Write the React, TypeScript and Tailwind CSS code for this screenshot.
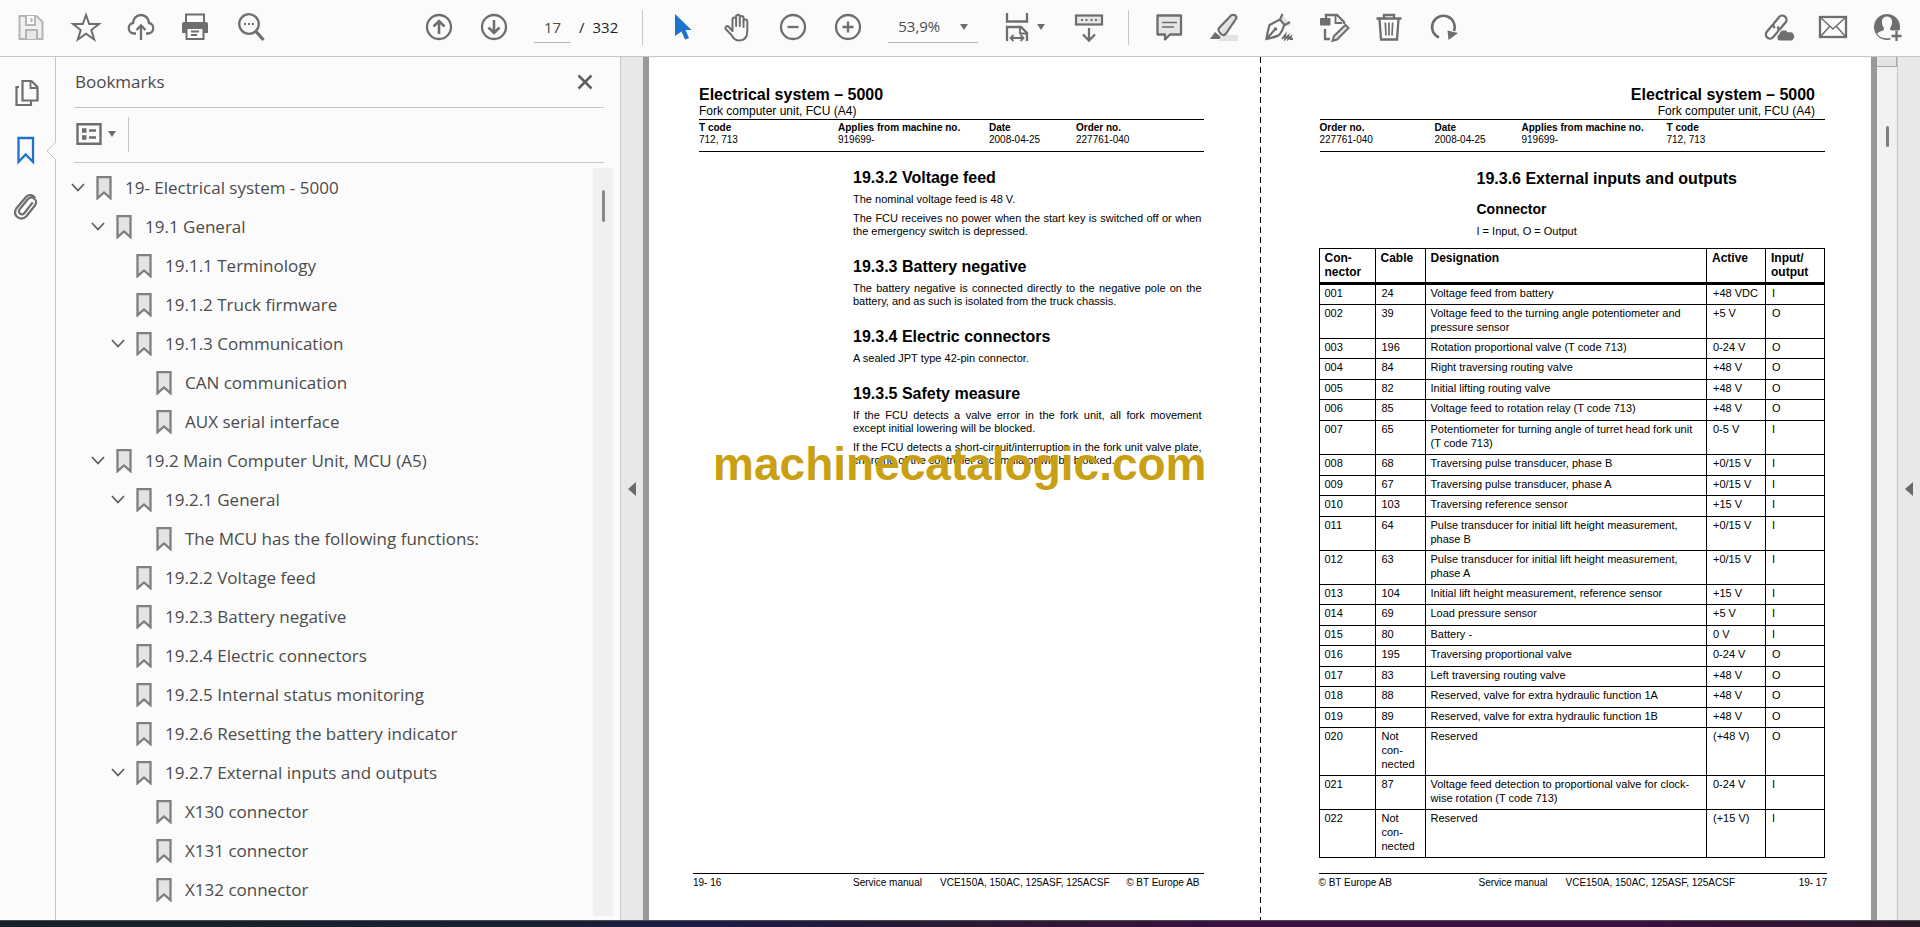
import { useState } from 'react'
import type { ReactNode } from 'react'
import clsx from 'clsx'

interface BookmarkItem {
  level: number
  label: string
  open?: boolean
}

const BOOKMARKS: BookmarkItem[] = [
  { level: 0, label: '19- Electrical system - 5000', open: true },
  { level: 1, label: '19.1 General', open: true },
  { level: 2, label: '19.1.1 Terminology' },
  { level: 2, label: '19.1.2 Truck firmware' },
  { level: 2, label: '19.1.3 Communication', open: true },
  { level: 3, label: 'CAN communication' },
  { level: 3, label: 'AUX serial interface' },
  { level: 1, label: '19.2 Main Computer Unit, MCU (A5)', open: true },
  { level: 2, label: '19.2.1 General', open: true },
  { level: 3, label: 'The MCU has the following functions:' },
  { level: 2, label: '19.2.2 Voltage feed' },
  { level: 2, label: '19.2.3 Battery negative' },
  { level: 2, label: '19.2.4 Electric connectors' },
  { level: 2, label: '19.2.5 Internal status monitoring' },
  { level: 2, label: '19.2.6 Resetting the battery indicator' },
  { level: 2, label: '19.2.7 External inputs and outputs', open: true },
  { level: 3, label: 'X130 connector' },
  { level: 3, label: 'X131 connector' },
  { level: 3, label: 'X132 connector' },
]

const INDENT = ['pl-0', 'pl-5', 'pl-10', 'pl-15']

// pin, cable, designation, active, input/output
const PINS: string[][] = [
  ['001', '24', 'Voltage feed from battery', '+48 VDC', 'I'],
  ['002', '39', 'Voltage feed to the turning angle potentiometer and pressure sensor', '+5 V', 'O'],
  ['003', '196', 'Rotation proportional valve (T code 713)', '0-24 V', 'O'],
  ['004', '84', 'Right traversing routing valve', '+48 V', 'O'],
  ['005', '82', 'Initial lifting routing valve', '+48 V', 'O'],
  ['006', '85', 'Voltage feed to rotation relay (T code 713)', '+48 V', 'O'],
  ['007', '65', 'Potentiometer for turning angle of turret head fork unit (T code 713)', '0-5 V', 'I'],
  ['008', '68', 'Traversing pulse transducer, phase B', '+0/15 V', 'I'],
  ['009', '67', 'Traversing pulse transducer, phase A', '+0/15 V', 'I'],
  ['010', '103', 'Traversing reference sensor', '+15 V', 'I'],
  ['011', '64', 'Pulse transducer for initial lift height measurement, phase B', '+0/15 V', 'I'],
  ['012', '63', 'Pulse transducer for initial lift height measurement, phase A', '+0/15 V', 'I'],
  ['013', '104', 'Initial lift height measurement, reference sensor', '+15 V', 'I'],
  ['014', '69', 'Load pressure sensor', '+5 V', 'I'],
  ['015', '80', 'Battery -', '0 V', 'I'],
  ['016', '195', 'Traversing proportional valve', '0-24 V', 'O'],
  ['017', '83', 'Left traversing routing valve', '+48 V', 'O'],
  ['018', '88', 'Reserved, valve for extra hydraulic function 1A', '+48 V', 'O'],
  ['019', '89', 'Reserved, valve for extra hydraulic function 1B', '+48 V', 'O'],
  ['020', 'Not\ncon-\nnected', 'Reserved', '(+48 V)', 'O'],
  ['021', '87', 'Voltage feed detection to proportional valve for clock-wise rotation (T code 713)', '0-24 V', 'I'],
  ['022', 'Not\ncon-\nnected', 'Reserved', '(+15 V)', 'I'],
]

const ICONS: Record<string, ReactNode> = {
  save: (
    <g stroke="#b5b5b5" strokeWidth="2">
      <path d="M2.500 3h17l6 6v17h-23z" fill="#f0f0f0" />
      <path d="M9 3v9h9V3M14.500 5v4" fill="#fbfbfb" />
      <path d="M9 26v-9h11v9" fill="#e9e9e9" />
    </g>
  ),
  star: <path d="M14 2l3.200 9H27l-7.700 6 2.900 9.500L14 20.800 5.800 26.500l2.900-9.500L1 11h9.800z" strokeWidth="2" />,
  upload: (
    <>
      <path d="M9 20.500H7A5.300 5.300 0 0 1 6 10a8 8 0 0 1 16 0 5.300 5.300 0 0 1-1 10.500h-2" />
      <path d="M14 27V13M9.500 17l4.500-4.500 4.500 4.500" />
    </>
  ),
  print: (
    <>
      <path d="M4 9V1.500h18V9" strokeWidth="2" />
      <path d="M2 9h22a2 2 0 0 1 2 2v9h-4v-4H4v4H0v-9a2 2 0 0 1 2-2z" fill="#6e6e6e" stroke="none" />
      <path d="M4.500 15v11h17V15z" fill="#fbfbfb" strokeWidth="2" />
      <path d="M9 18.500h8M9 22h6" strokeWidth="1.800" />
    </>
  ),
  search: (
    <>
      <circle cx="12" cy="11" r="9.800" />
      <path d="M18.500 18l8 9" strokeWidth="3.200" />
      <path d="M7 11h2M11 11h2M15 11h2" strokeWidth="2" />
    </>
  ),
  up: (
    <>
      <circle cx="14" cy="14" r="12" />
      <path d="M14 21V8M8.500 13.500L14 8l5.500 5.500" strokeWidth="2.600" />
    </>
  ),
  down: (
    <>
      <circle cx="14" cy="14" r="12" />
      <path d="M14 7v13M8.500 14.500L14 20l5.500-5.500" strokeWidth="2.600" />
    </>
  ),
  cursor: <path d="M6 1l16.500 16h-6l3.500 8-4 1.500-3.500-8L6 23z" fill="#1b73cc" stroke="none" />,
  hand: (
    <path
      d="M8.500 15V6.200a1.800 1.800 0 0 1 3.600 0V13 3.500a1.800 1.800 0 0 1 3.700 0V13 4.800a1.800 1.800 0 0 1 3.700 0V14 8.300a1.900 1.900 0 0 1 3.800 0V18c0 6-3 9.500-8 9.500-4.300 0-6.300-2.500-8-5.800L1.600 16c-1-2 1.300-3.800 3-2.200L8.500 18z"
      strokeWidth="2"
      strokeLinejoin="round"
    />
  ),
  minus: (
    <>
      <circle cx="14" cy="14" r="12" />
      <path d="M8.500 14h11" />
    </>
  ),
  plus: (
    <>
      <circle cx="14" cy="14" r="12" />
      <path d="M8.500 14h11M14 8.500v11" />
    </>
  ),
  fit: (
    <>
      <path d="M4 0v8.500h20V0" />
      <path d="M4 28V14h14l6 6v8" />
      <path d="M17 14v6.500h7" strokeWidth="1.800" />
      <path d="M8 25h12M10.500 22L7.500 25l3 3M17.500 22l3 3-3 3" strokeWidth="1.800" />
    </>
  ),
  keyboard: (
    <>
      <rect x="1" y="2.500" width="26" height="9" fill="#e6e6e6" strokeWidth="2.200" />
      <path d="M6 7h2M10.500 7h2M15.500 7h2M20 7h2" strokeWidth="2" />
      <path d="M14 15v12M8 21.500l6 6 6-6" />
    </>
  ),
  comment: (
    <>
      <path d="M2.500 2.500h23.500v19H15L10 26.500v-5H2.500z" fill="#e6e6e6" strokeLinejoin="round" />
      <path d="M7 9.500h15M7 14h12" strokeWidth="1.600" />
    </>
  ),
  marker: (
    <>
      <path d="M14 22h14v6H8z" fill="#e2e2e2" stroke="none" />
      <path d="M9 15L21 2.500c1.500-1.300 5.500-.8 5.500 2.500L16 20.500c-1.500 2-3.500 2-5 .5s-3.500-4-2-6z" fill="#e2e2e2" strokeWidth="2.200" />
      <path d="M5 19l6 5-1.500 2H0z" fill="#6e6e6e" stroke="none" />
    </>
  ),
  sign: (
    <>
      <path d="M18 3l8 8-2.500 2.500L15.500 6z" fill="#e2e2e2" stroke="none" />
      <path d="M17.500 1L15 6.500 4.500 12C3 17 2 22 1.500 26 6 25 12 23.500 14 22c3-3 5-9.500 5-9.500L25 9M15 6.500l5 6M2 25.500L9.500 17" strokeWidth="2.200" />
      <circle cx="10.500" cy="16" r="1.800" fill="#6e6e6e" stroke="none" />
      <path d="M17 26l3.500-4.500-.5 4.500 3.500-3.500-.5 3.500 3-2.500-.5 2.500H28" strokeWidth="1.800" />
    </>
  ),
  edit: (
    <>
      <path d="M6 5V2h11l7 7v2M5 16v10h5" />
      <path d="M15.500 2v8H22" strokeWidth="1.800" />
      <rect x="0" y="5" width="10.500" height="7.500" rx="1" fill="#6e6e6e" stroke="none" />
      <path d="M14 23L25.500 12l3 3L17 26.500l-4.500 1.300z" fill="#e2e2e2" strokeWidth="2" />
    </>
  ),
  trash: (
    <>
      <path d="M1.500 5.500h25M9 5V2h10v3M4.500 6l1.500 20.500h16L23.500 6" />
      <path d="M10.300 9.500l.7 13M14 9.500v13M17.700 9.500l-.7 13" strokeWidth="1.700" />
    </>
  ),
  rotate: (
    <>
      <path d="M9 24.500A11.300 11.300 0 1 1 24 18" strokeWidth="2.600" />
      <path d="M17.500 17.500L28 20l-9.500 7z" fill="#6e6e6e" stroke="none" />
    </>
  ),
  link: (
    <>
      <g transform="rotate(-50 12 14)">
        <path d="M12 10H2.500a4.200 4.200 0 0 0 0 8.400H9a4.200 4.200 0 0 0 4.200-3.600" />
        <path d="M12 18.400h9.500a4.200 4.200 0 0 0 0-8.400h-7a4.200 4.200 0 0 0-4.200 3.800" />
      </g>
      <path d="M15 28a4 4 0 0 1 0-7 5 5 0 0 1 9-2 4.500 4.500 0 0 1 3.500 9z" fill="#6e6e6e" stroke="#fbfbfb" strokeWidth="1" />
    </>
  ),
  mail: (
    <>
      <rect x="1" y="4" width="26" height="20" />
      <path d="M2 5l12 11L26 5M2 23l8.500-9.500M26 23l-8.500-9.500" strokeWidth="1.500" />
    </>
  ),
  user: (
    <>
      <circle cx="13" cy="14" r="13" fill="#6e6e6e" stroke="none" />
      <path d="M13 3.500c4 0 5.500 3 5 6.800-.4 3-2 4.200-2 5.700 0 2.500 7 2.500 6.500 5C21 24 17 25.300 13 25.300S5 24 3.500 21c-.5-2.500 6.500-2.500 6.500-5 0-1.500-1.600-2.700-2-5.700-.5-3.800 1-6.800 5-6.800z" fill="#fbfbfb" stroke="none" />
      <path d="M16.500 17.500H28V28H16.500z" fill="#fbfbfb" stroke="none" />
      <path d="M22.500 18v10M17.500 23h10" />
    </>
  ),
  pages: (
    <>
      <path d="M7 8H4.500v18H19v-4" strokeWidth="2.200" />
      <path d="M10.500 2h9l6 6v13.500h-15z" fill="#fbfbfb" strokeWidth="2.200" />
      <path d="M18.500 2v7h7" strokeWidth="1.800" />
    </>
  ),
  bookmark: <path d="M6.500 2h14.500v24L13.700 18.500 6.500 26z" stroke="#1b73cc" />,
  clip: (
    <path
      d="M21 10.500l-9 11.500a3.200 3.200 0 0 1-5-4L15.500 7.500a5 5 0 0 1 8 6L14 25.500C8 31-1 24.500 3.500 17L14 4.500c3-3 8-2 9.500 1.500"
      transform="translate(1 -0.500) scale(0.940)"
      strokeWidth="2.400"
    />
  ),
}

function Icon({ name }: { name: string }) {
  return (
    <svg viewBox="0 0 28 28" className="size-7 overflow-visible" fill="none" stroke="#6e6e6e" strokeWidth="2.300" aria-hidden="true">
      {ICONS[name]}
    </svg>
  )
}

function ToolButton({ name, label }: { name: string; label: string }) {
  return (
    <button type="button" aria-label={label} title={label} className="flex h-10 w-[55px] shrink-0 items-center justify-center">
      <Icon name={name} />
    </button>
  )
}

function Caret() {
  return (
    <svg viewBox="0 0 8 6" className="h-[6px] w-2 shrink-0" aria-hidden="true">
      <path d="M0 0h8L4 6z" fill="#6e6e6e" />
    </svg>
  )
}

function Toolbar() {
  const [page, setPage] = useState('17')

  return (
    <header className="flex h-[57px] shrink-0 items-center border-b border-[#c6c6c6] bg-[#fbfbfb] pr-[5px] pl-[3px] pb-[2px]">
      <ToolButton name="save" label="Save" />
      <ToolButton name="star" label="Star" />
      <ToolButton name="upload" label="Upload" />
      <ToolButton name="print" label="Print" />
      <ToolButton name="search" label="Find" />
      <div className="ml-[133px] flex">
        <ToolButton name="up" label="Previous page" />
        <ToolButton name="down" label="Next page" />
      </div>
      <div className="ml-[13px] flex items-center font-['Open_Sans',sans-serif] text-[15px]">
        <input
          aria-label="Page number"
          value={page}
          onChange={(e) => setPage(e.target.value)}
          className="h-8 w-[37px] border-b border-[#b9b9b9] bg-transparent text-center text-[#4b4b4b] outline-none"
        />
        <span className="ml-2 text-[#222]">/</span>
        <span className="ml-2 text-[#222]">332</span>
      </div>
      <div className="ml-6 h-[35px] w-px bg-[#c6c6c6]" />
      <div className="ml-3 flex">
        <ToolButton name="cursor" label="Select" />
        <ToolButton name="hand" label="Pan" />
        <ToolButton name="minus" label="Zoom out" />
        <ToolButton name="plus" label="Zoom in" />
      </div>
      <div className="ml-[13px] flex h-8 w-[90px] items-center border-b border-[#b9b9b9] pr-[10px]">
        <select
          aria-label="Zoom level"
          defaultValue="53,9%"
          className="w-full appearance-none bg-transparent pl-[10px] font-['Open_Sans',sans-serif] text-[15px] text-[#4b4b4b] outline-none"
        >
          <option>53,9%</option>
          <option>100%</option>
        </select>
        <Caret />
      </div>
      <button type="button" aria-label="Fit width" className="ml-[25px] flex h-10 w-[42px] items-center justify-between">
        <Icon name="fit" />
        <Caret />
      </button>
      <div className="ml-4 flex">
        <ToolButton name="keyboard" label="Scrolling mode" />
      </div>
      <div className="ml-3 h-[35px] w-px bg-[#c6c6c6]" />
      <div className="ml-3 flex">
        <ToolButton name="comment" label="Comment" />
        <ToolButton name="marker" label="Highlight" />
        <ToolButton name="sign" label="Sign" />
        <ToolButton name="edit" label="Edit" />
        <ToolButton name="trash" label="Delete" />
        <ToolButton name="rotate" label="Rotate" />
      </div>
      <div className="ml-auto flex">
        <ToolButton name="link" label="Share link" />
        <ToolButton name="mail" label="Send by mail" />
        <ToolButton name="user" label="Account" />
      </div>
    </header>
  )
}

function Rail() {
  return (
    <nav className="relative flex w-14 shrink-0 flex-col gap-[17px] border-r border-[#c6c6c6] bg-[#fbfbfb] pt-4 pr-[3px]">
      <button type="button" aria-label="Page thumbnails" className="flex h-10 items-center justify-center">
        <Icon name="pages" />
      </button>
      <button type="button" aria-label="Bookmarks" className="flex h-10 items-center justify-center">
        <Icon name="bookmark" />
      </button>
      <button type="button" aria-label="Attachments" className="flex h-10 items-center justify-center">
        <Icon name="clip" />
      </button>
      <svg viewBox="0 0 10 18" className="absolute top-[85px] -right-px h-[18px] w-[10px]" aria-hidden="true">
        <path d="M10 0L1 9l9 9" fill="#fbfbfb" stroke="#c6c6c6" />
      </svg>
    </nav>
  )
}

function BookmarkRow({ item }: { item: BookmarkItem }) {
  return (
    <li className={INDENT[item.level]}>
      <button type="button" className="flex h-[39px] items-center text-left">
        <svg viewBox="0 0 14 9" className="h-[9px] w-[14px]" fill="none" stroke="#5f5f5f" strokeWidth="1.800" aria-hidden="true">
          {item.open && <path d="M1 1l6 6.500L13 1" />}
        </svg>
        <svg viewBox="0 0 16 24" className="ml-[11px] h-6 w-4" fill="#e4e4e4" stroke="#7f7f7f" strokeWidth="2.300" aria-hidden="true">
          <path d="M1.500 1.200h13v21L8 16.500l-6.500 5.700z" />
        </svg>
        <span className="ml-[13px] whitespace-nowrap">{item.label}</span>
      </button>
    </li>
  )
}

function BookmarksPanel() {
  return (
    <aside className="flex w-[565px] shrink-0 flex-col border-r border-[#c6c6c6] bg-[#fbfbfb] pl-[18px] font-['Open_Sans',sans-serif] text-[17px] text-[#4b4b4b]">
      <div className="mr-4 flex h-[51px] items-center justify-between border-b border-[#c6c6c6] pr-[11px] pb-px pl-px">
        <h2>Bookmarks</h2>
        <button type="button" aria-label="Close">
          <svg viewBox="0 0 16 16" className="size-4" stroke="#5f5f5f" strokeWidth="2.500" aria-hidden="true">
            <path d="M1.500 1.500l13 13M14.500 1.500l-13 13" />
          </svg>
        </button>
      </div>
      <div className="mr-4 flex h-[55px] items-center border-b border-[#c6c6c6] pb-[2px]">
        <button type="button" aria-label="Options" className="flex items-center gap-[6px] pl-[2px]">
          <svg viewBox="0 0 26 22" className="h-[22px] w-[26px]" fill="none" stroke="#6e6e6e" strokeWidth="2.400" aria-hidden="true">
            <path d="M1.500 1.200h23v19.600h-23z" />
            <path d="M13 7.500h7M13 14.500h7" />
            <path d="M6 7.500h4.500M6 14.500h4.500" strokeWidth="4.500" />
          </svg>
          <Caret />
        </button>
        <div className="ml-3 h-[35px] w-px bg-[#c6c6c6]" />
      </div>
      <div className="flex min-h-0 flex-1 pt-[5px] pr-[7px] pb-1">
        <ul className="-ml-[3px] min-w-0 flex-1 overflow-hidden">
          {BOOKMARKS.map((b) => (
            <BookmarkRow key={b.label} item={b} />
          ))}
        </ul>
        <div className="flex w-5 justify-center bg-[#f0f0f0] pt-[22px]">
          <div className="h-8 w-[3px] rounded bg-[#8a8a8a]" />
        </div>
      </div>
    </aside>
  )
}

function Collapse({ label }: { label: string }) {
  return (
    <button type="button" aria-label={label} className="flex w-[22px] shrink-0 items-center justify-center bg-[#e8e8e8]">
      <svg viewBox="0 0 8 14" className="h-[14px] w-2" aria-hidden="true">
        <path d="M8 0v14L0 7z" fill="#6a6a6a" />
      </svg>
    </button>
  )
}

function Meta({ label, value, className }: { label: string; value: string; className?: string }) {
  return (
    <div className={clsx('shrink-0', className)}>
      <dt className="font-bold">{label}</dt>
      <dd>{value}</dd>
    </div>
  )
}

function Section({ title, paragraphs }: { title: string; paragraphs: string[] }) {
  return (
    <section className="mb-[19px]">
      <h3 className="mb-[5px] text-[16px] leading-5 font-bold">{title}</h3>
      {paragraphs.map((p) => (
        <p key={p} className="mb-[6px] text-justify text-[11px] leading-[13px]">
          {p}
        </p>
      ))}
    </section>
  )
}

function LeftPage() {
  return (
    <article className="relative flex min-w-0 flex-col bg-white pt-7 pr-14 pb-[31px] pl-[50px]">
      <h2 className="text-[16px] leading-5 font-bold">Electrical system – 5000</h2>
      <p className="text-[12px] leading-3">Fork computer unit, FCU (A4)</p>
      <dl className="mt-[2px] flex h-[33px] border-y border-black pt-[2px] text-[10px] leading-3">
        <Meta label="T code" value="712, 713" className="w-[139px]" />
        <Meta label="Applies from machine no." value="919699-" className="w-[151px]" />
        <Meta label="Date" value="2008-04-25" className="w-[87px]" />
        <Meta label="Order no." value="227761-040" />
      </dl>
      <div className="mt-4 mr-[2px] ml-[154px]">
        <Section
          title="19.3.2 Voltage feed"
          paragraphs={[
            'The nominal voltage feed is 48 V.',
            'The FCU receives no power when the start key is switched off or when the emergency switch is depressed.',
          ]}
        />
        <Section
          title="19.3.3 Battery negative"
          paragraphs={['The battery negative is connected directly to the negative pole on the battery, and as such is isolated from the truck chassis.']}
        />
        <Section title="19.3.4 Electric connectors" paragraphs={['A sealed JPT type 42-pin connector.']} />
        <Section
          title="19.3.5 Safety measure"
          paragraphs={[
            'If the FCU detects a valve error in the fork unit, all fork movement except initial lowering will be blocked.',
            'If the FCU detects a short-circuit/interruption in the fork unit valve plate, charging of the controller accumulator will be blocked.',
          ]}
        />
      </div>
      <footer className="mt-auto -ml-[6px] flex border-t border-black pt-[3px] text-[10px] leading-3">
        <span className="w-40">19- 16</span>
        <span className="w-[87px]">Service manual</span>
        <span>VCE150A, 150AC, 125ASF, 125ACSF</span>
        <span className="ml-auto pr-1">© BT Europe AB</span>
      </footer>
      <p className="absolute top-[381px] right-[53px] text-[46px] leading-[52px] font-bold text-[#c9a013]">machinecatalogic.com</p>
    </article>
  )
}

function RightPage() {
  return (
    <article className="flex min-w-0 flex-col bg-white pt-7 pr-[46px] pb-[31px] pl-[58px]">
      <h2 className="pr-[10px] text-right text-[16px] leading-5 font-bold">Electrical system – 5000</h2>
      <p className="pr-[10px] text-right text-[12px] leading-3">Fork computer unit, FCU (A4)</p>
      <dl className="mt-[2px] ml-px flex h-[33px] border-y border-black pt-[2px] text-[10px] leading-3">
        <Meta label="Order no." value="227761-040" className="w-[115px]" />
        <Meta label="Date" value="2008-04-25" className="w-[87px]" />
        <Meta label="Applies from machine no." value="919699-" className="w-[145px]" />
        <Meta label="T code" value="712, 713" />
      </dl>
      <div className="mt-[17px] ml-[158px]">
        <h3 className="text-[16px] leading-5 font-bold">19.3.6 External inputs and outputs</h3>
        <h4 className="mt-[11px] text-[14px] leading-[18px] font-bold">Connector</h4>
        <p className="mt-[7px] text-[11px] leading-[13px]">I = Input, O = Output</p>
      </div>
      <table className="mt-[10px] w-full table-fixed border-collapse text-[11px] leading-[14px]">
        <colgroup>
          <col className="w-[56px]" />
          <col className="w-[50px]" />
          <col />
          <col className="w-[59px]" />
          <col className="w-[59px]" />
        </colgroup>
        <thead>
          <tr className="h-[35px] border-b-[3px] border-black text-left align-top text-[12px] leading-[14px]">
            {['Con-nector', 'Cable', 'Designation', 'Active', 'Input/ output'].map((h) => (
              <th key={h} className="border-x border-t border-black pt-[2px] pl-[5px] font-bold">
                {h}
              </th>
            ))}
          </tr>
        </thead>
        <tbody>
          {PINS.map((row) => (
            <tr key={row[0]} className="h-5 align-top even:h-[21px]">
              {row.map((cell, i) => (
                <td
                  key={i}
                  className={clsx(
                    'border border-black pt-[1px] pb-1 whitespace-pre-line',
                    i === 2 && 'pr-[6px]',
                    i === 0 || i === 2 ? 'pl-[5px]' : 'pl-[6px]',
                  )}
                >
                  {cell}
                </td>
              ))}
            </tr>
          ))}
        </tbody>
      </table>
      <footer className="mt-auto -mr-[2px] flex border-t border-black pt-[3px] text-[10px] leading-3">
        <span className="w-40">© BT Europe AB</span>
        <span className="w-[87px]">Service manual</span>
        <span>VCE150A, 150AC, 125ASF, 125ACSF</span>
        <span className="ml-auto">19- 17</span>
      </footer>
    </article>
  )
}

export default function App() {
  return (
    <div className="flex h-screen flex-col overflow-hidden bg-[#fbfbfb]">
      <Toolbar />
      <div className="flex min-h-0 flex-1">
        <Rail />
        <BookmarksPanel />
        <Collapse label="Hide navigation pane" />
        <main className="grid min-w-0 flex-1 grid-cols-[1fr_1px_1fr] border-x-[6px] border-[#999] bg-white font-['Liberation_Sans',Arial,sans-serif] text-black">
          <LeftPage />
          <div className="bg-[repeating-linear-gradient(to_bottom,#000_0px,#000_6px,#fff_6px,#fff_10px)]" />
          <RightPage />
        </main>
        <div className="flex w-[21px] shrink-0 flex-col items-center border-r border-[#c6c6c6] bg-[#f1f1f1]">
          <div className="h-[10px] w-full border-r border-b border-[#a8a8a8] bg-[#e4e4e4]" />
          <div className="mt-[59px] h-[21px] w-[3px] rounded bg-[#7f7f7f]" />
        </div>
        <Collapse label="Show tools pane" />
      </div>
      <div className="h-[7px] shrink-0 border-t border-[#4a4a55] bg-[linear-gradient(to_right,#15212a_0%,#17202e_28%,#1c1c48_36%,#2b1a33_50%,#3a1040_65%,#3a1040_85%,#2a1828_100%)]" />
    </div>
  )
}
